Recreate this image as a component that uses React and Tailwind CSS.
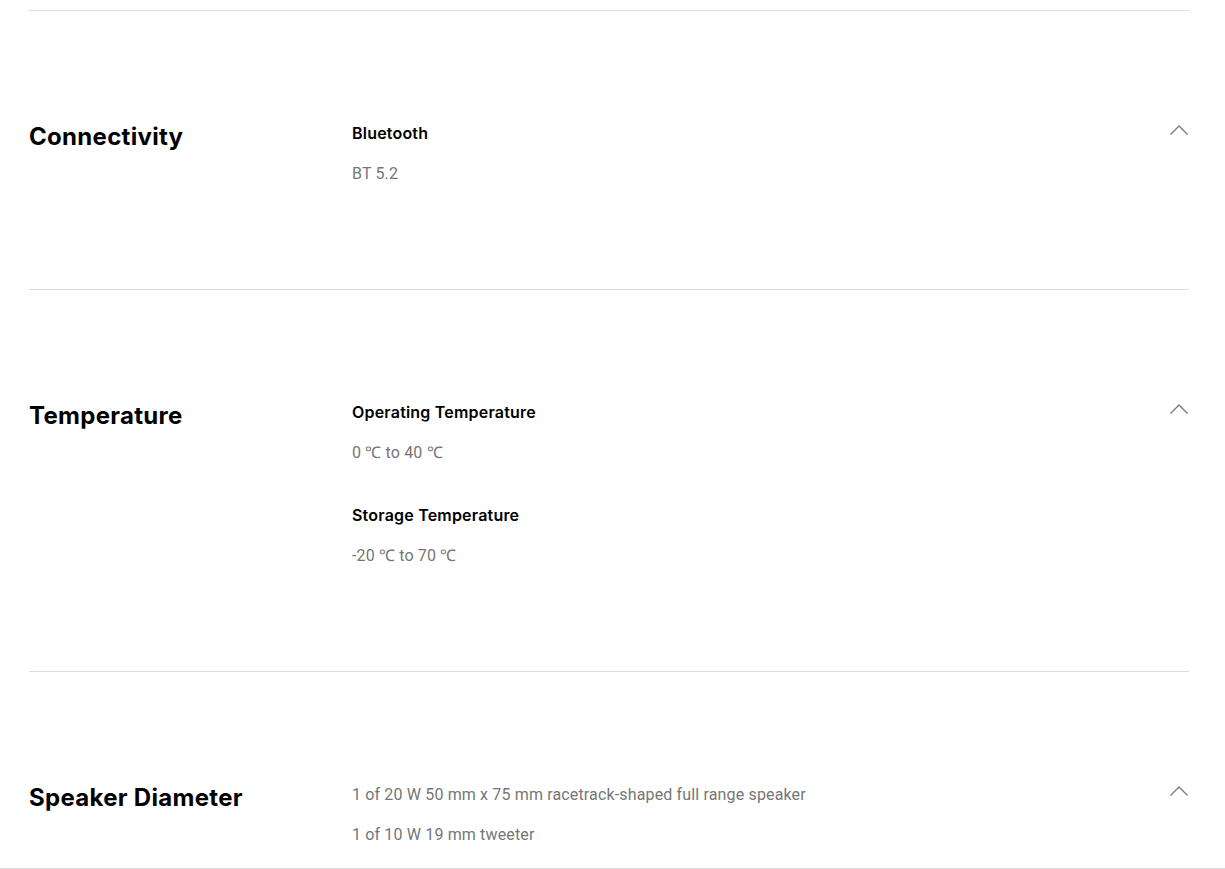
import React from "react";

const specs = [
    {
        title: "Connectivity",
        items: [{ label: "Bluetooth", values: ["BT 5.2"] }],
    },
    {
        title: "Temperature",
        items: [
            { label: "Operating Temperature", values: ["0 ℃ to 40 ℃"] },
            { label: "Storage Temperature", values: ["-20 ℃ to 70 ℃"] },
        ],
    },
    {
        title: "Speaker Diameter",
        items: [
            {
                label: null,
                values: [
                    "1 of 20 W 50 mm x 75 mm racetrack-shaped full range speaker",
                    "1 of 10 W 19 mm tweeter",
                ],
            },
        ],
    },
];

const ChevronUp = () => (
    <svg className="mt-[4px]" width="20" height="12" viewBox="0 0 20 12" fill="none">
        <path d="M1.5 10.5L10 2L18.5 10.5" stroke="#7a7a7a" strokeWidth="1.4" />
    </svg>
);

const SpecSection = ({ spec }) => (
    <section className="border-t border-[#dddddd] pt-[109px] pb-[105px] grid grid-cols-[323px_1fr_auto]">
        <h2 className="text-[24px] leading-8 font-bold text-black font-['Inter',sans-serif] tracking-[0.3px] mt-[1px]">
            {spec.title}
        </h2>
        <div className="flex flex-col gap-[39px]">
            {spec.items.map((item, i) => (
                <div key={i} className="flex flex-col gap-4">
                    {item.label && (
                        <h3 className="text-[16px] leading-6 font-semibold text-black font-['Inter',sans-serif] tracking-[0.2px] translate-y-[1px]">
                            {item.label}
                        </h3>
                    )}
                    {item.values.map((v) => (
                        <p key={v} className="text-[16px] leading-6 text-[#767676] font-['Roboto',sans-serif] tracking-[0.15px] translate-y-[2px]">
                            {v}
                        </p>
                    ))}
                </div>
            ))}
        </div>
        <button className="self-start">
            <ChevronUp />
        </button>
    </section>
);

export default function App() {
    return (
        <div className="h-[869px] flex flex-col bg-white overflow-hidden">
            <div className="flex-1 overflow-hidden pt-[10px] px-[29px] pr-[36px]">
                {specs.map((s) => (
                    <SpecSection key={s.title} spec={s} />
                ))}
            </div>
            <div className="h-px bg-[#dddddd]" />
        </div>
    );
}
